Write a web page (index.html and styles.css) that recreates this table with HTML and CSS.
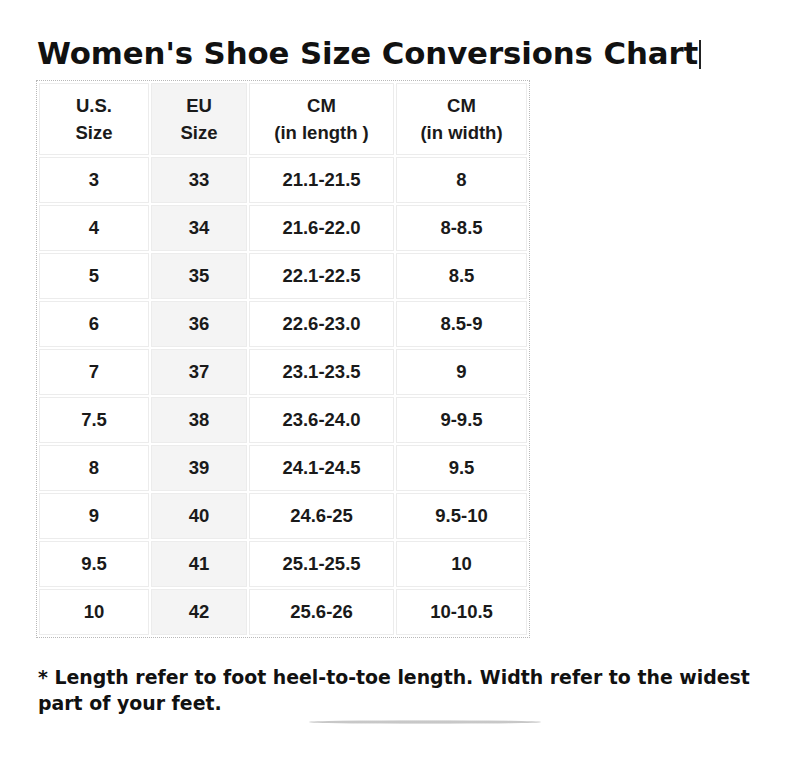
FILE: index.html
```html
<!DOCTYPE html>
<html>
<head>
<meta charset="utf-8">
<link rel="stylesheet" href="styles.css">
</head>
<body>
<div class="page">
  <h1 class="title">Women's Shoe Size Conversions Chart<span class="caret"></span></h1>
  <table class="chart">
    <thead>
      <tr><th class="c1">U.S.<br>Size</th><th class="c2 eu">EU<br>Size</th><th class="c3">CM<br>(in length )</th><th class="c4">CM<br>(in width)</th></tr>
    </thead>
    <tbody>
      <tr><td>3</td><td class="eu">33</td><td>21.1-21.5</td><td>8</td></tr>
      <tr><td>4</td><td class="eu">34</td><td>21.6-22.0</td><td>8-8.5</td></tr>
      <tr><td>5</td><td class="eu">35</td><td>22.1-22.5</td><td>8.5</td></tr>
      <tr><td>6</td><td class="eu">36</td><td>22.6-23.0</td><td>8.5-9</td></tr>
      <tr><td>7</td><td class="eu">37</td><td>23.1-23.5</td><td>9</td></tr>
      <tr><td>7.5</td><td class="eu">38</td><td>23.6-24.0</td><td>9-9.5</td></tr>
      <tr><td>8</td><td class="eu">39</td><td>24.1-24.5</td><td>9.5</td></tr>
      <tr><td>9</td><td class="eu">40</td><td>24.6-25</td><td>9.5-10</td></tr>
      <tr><td>9.5</td><td class="eu">41</td><td>25.1-25.5</td><td>10</td></tr>
      <tr><td>10</td><td class="eu">42</td><td>25.6-26</td><td>10-10.5</td></tr>
    </tbody>
  </table>
  <p class="note">* Length refer to foot heel-to-toe length. Width refer to the widest part of your feet.</p>
  <div class="shadow-line"></div>
</div>
</body>
</html>
```

FILE: styles.css
```css
html, body {
  margin: 0;
  padding: 0;
  background: #ffffff;
}
.page {
  padding: 33px 0 0 37px;
  width: 730px;
}
.title {
  margin: 0;
  font-family: "DejaVu Sans", Verdana, sans-serif;
  font-weight: bold;
  font-size: 30.8px;
  line-height: 40px;
  color: #111;
  letter-spacing: -0.1px;
  height: 47px;
  white-space: nowrap;
}
.caret {
  display: inline-block;
  width: 2px;
  height: 29px;
  background: #222;
  vertical-align: -5px;
  margin-left: 1px;
}
.chart {
  border: 1px dotted #b8b8b8;
  border-spacing: 2px;
  margin-left: -1px;
  font-family: "Liberation Sans", Arial, sans-serif;
  font-weight: bold;
  font-size: 18.5px;
  color: #1a1a1a;
  text-align: center;
}
.chart th, .chart td {
  border: 1px solid #ececec;
  padding: 0;
  background: #fff;
}
.chart th {
  height: 70px;
  line-height: 27px;
  font-weight: bold;
}
.chart td {
  height: 44px;
}
.chart .eu {
  background: #f4f4f4;
}
.c1 { width: 108px; }
.c2 { width: 94px; }
.c3 { width: 143px; }
.c4 { width: 129px; }
.note {
  margin: 26px 0 0 1px;
  font-family: "DejaVu Sans", Verdana, sans-serif;
  font-weight: bold;
  font-size: 18.9px;
  line-height: 26px;
  color: #111;
  width: 730px;
}
.shadow-line {
  margin: 4px 0 0 272px;
  width: 232px;
  height: 4px;
  border-radius: 50%;
  background: linear-gradient(to bottom, #e8e8e8, #bdbdbd 50%, #e8e8e8);
}
```
